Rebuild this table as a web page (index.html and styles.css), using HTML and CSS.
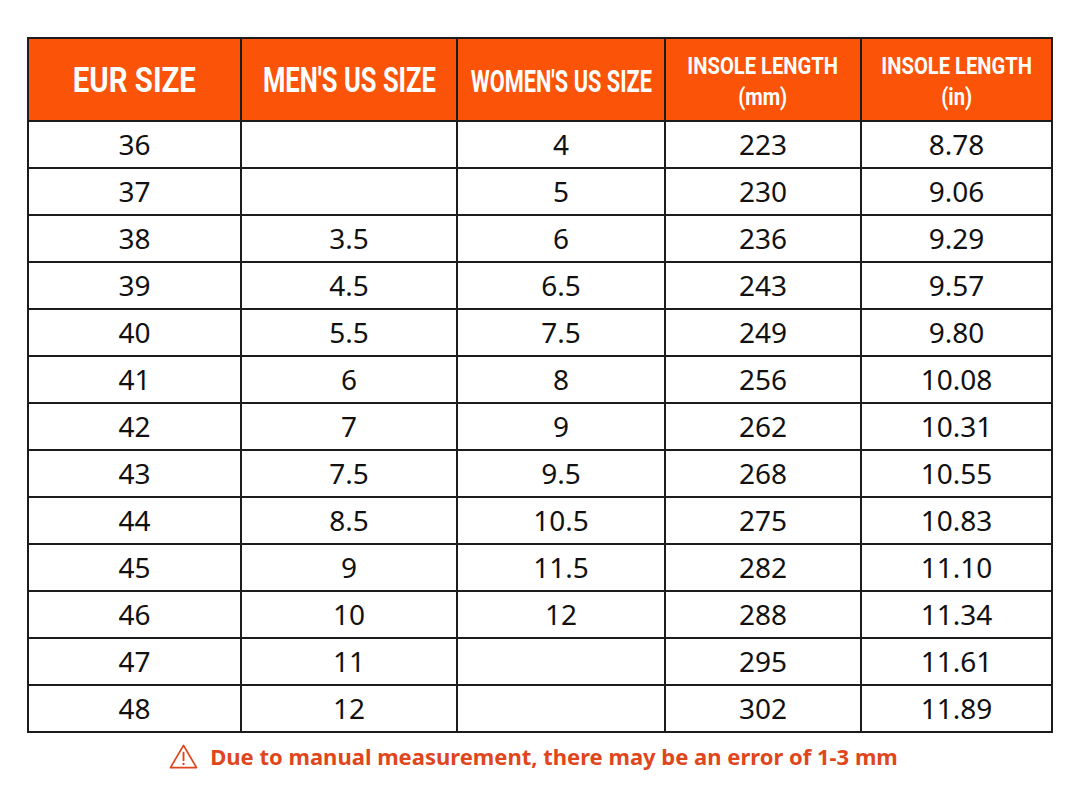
FILE: index.html
```html
<!DOCTYPE html>
<html>
<head>
<meta charset="utf-8">
<link rel="stylesheet" href="styles.css">
</head>
<body>
<div class="page">
  <table class="chart">
    <colgroup>
      <col class="c1"><col class="c2"><col class="c3"><col class="c4"><col class="c5">
    </colgroup>
    <thead>
      <tr>
        <th><div class="hc"><span class="ht h-eur">EUR SIZE</span></div></th>
        <th><div class="hc"><span class="ht h-men">MEN'S US SIZE</span></div></th>
        <th><div class="hc"><span class="ht h-women">WOMEN'S US SIZE</span></div></th>
        <th><div class="hc"><span class="ht h-two">INSOLE LENGTH<br>(mm)</span></div></th>
        <th><div class="hc"><span class="ht h-two">INSOLE LENGTH<br>(in)</span></div></th>
      </tr>
    </thead>
    <tbody>
      <tr><td>36</td><td></td><td>4</td><td>223</td><td>8.78</td></tr>
      <tr><td>37</td><td></td><td>5</td><td>230</td><td>9.06</td></tr>
      <tr><td>38</td><td>3.5</td><td>6</td><td>236</td><td>9.29</td></tr>
      <tr><td>39</td><td>4.5</td><td>6.5</td><td>243</td><td>9.57</td></tr>
      <tr><td>40</td><td>5.5</td><td>7.5</td><td>249</td><td>9.80</td></tr>
      <tr><td>41</td><td>6</td><td>8</td><td>256</td><td>10.08</td></tr>
      <tr><td>42</td><td>7</td><td>9</td><td>262</td><td>10.31</td></tr>
      <tr><td>43</td><td>7.5</td><td>9.5</td><td>268</td><td>10.55</td></tr>
      <tr><td>44</td><td>8.5</td><td>10.5</td><td>275</td><td>10.83</td></tr>
      <tr><td>45</td><td>9</td><td>11.5</td><td>282</td><td>11.10</td></tr>
      <tr><td>46</td><td>10</td><td>12</td><td>288</td><td>11.34</td></tr>
      <tr><td>47</td><td>11</td><td></td><td>295</td><td>11.61</td></tr>
      <tr><td>48</td><td>12</td><td></td><td>302</td><td>11.89</td></tr>
    </tbody>
  </table>
  <p class="note">
    <svg class="warn" viewBox="0 0 32 28" width="31" height="27" aria-hidden="true">
      <path d="M16 2.5 L29.5 25.5 L2.5 25.5 Z" fill="none" stroke="#e0461c" stroke-width="1.8" stroke-linejoin="round"/>
      <path d="M16 10 L16 18" stroke="#e0461c" stroke-width="2" stroke-linecap="round"/>
      <circle cx="16" cy="21.8" r="1.2" fill="#e0461c"/>
    </svg>
    <span>Due to manual measurement, there may be an error of 1-3 mm</span>
  </p>
</div>
</body>
</html>
```

FILE: styles.css
```css
html, body {
  margin: 0;
  padding: 0;
  background: #ffffff;
}

.page {
  width: 1080px;
  height: 800px;
  padding: 37px 0 0 27px;
  box-sizing: border-box;
}

.chart {
  border-collapse: collapse;
  table-layout: fixed;
  width: 1024px;
  border: 2px solid #1c1c1c;
}

.c1 { width: 213px; }
.c2 { width: 216px; }
.c3 { width: 208px; }
.c4 { width: 196px; }
.c5 { width: 191px; }

.chart th,
.chart td {
  border: 2px solid #1c1c1c;
  text-align: center;
  padding: 0;
}

.chart th {
  background: #fb5307;
  color: #ffffff;
  height: 81px;
  white-space: nowrap;
}

.hc {
  display: flex;
  justify-content: center;
  align-items: center;
  height: 81px;
}

.ht {
  display: block;
  flex: none;
  font-family: Roboto, "Liberation Sans", sans-serif;
  font-weight: 700;
  text-align: center;
  transform-origin: center center;
}

.h-eur { font-size: 35px; line-height: 40px; transform: scaleX(0.84); margin-top: 2px; }
.h-men { font-size: 35px; line-height: 40px; transform: scaleX(0.73); margin-top: 2px; }
.h-women { font-size: 32px; line-height: 38px; transform: scaleX(0.68); margin-top: 2px; }
.h-two { font-size: 24px; line-height: 31px; transform: scaleX(0.84); margin-top: 4px; }

.chart td {
  height: 45px;
  font-family: "Noto Sans", Roboto, sans-serif;
  font-weight: 400;
  font-size: 28px;
  color: #111111;
  line-height: 45px;
}

.note {
  margin: 8px 0 0 0;
  width: 1024px;
  display: flex;
  justify-content: center;
  align-items: center;
  gap: 11px;
  font-family: "Noto Sans", "Open Sans", sans-serif;
  font-weight: 700;
  font-size: 22px;
  color: #e0461c;
  padding-right: 12px;
  box-sizing: border-box;
}

.warn { display: block; flex: none; }
```
